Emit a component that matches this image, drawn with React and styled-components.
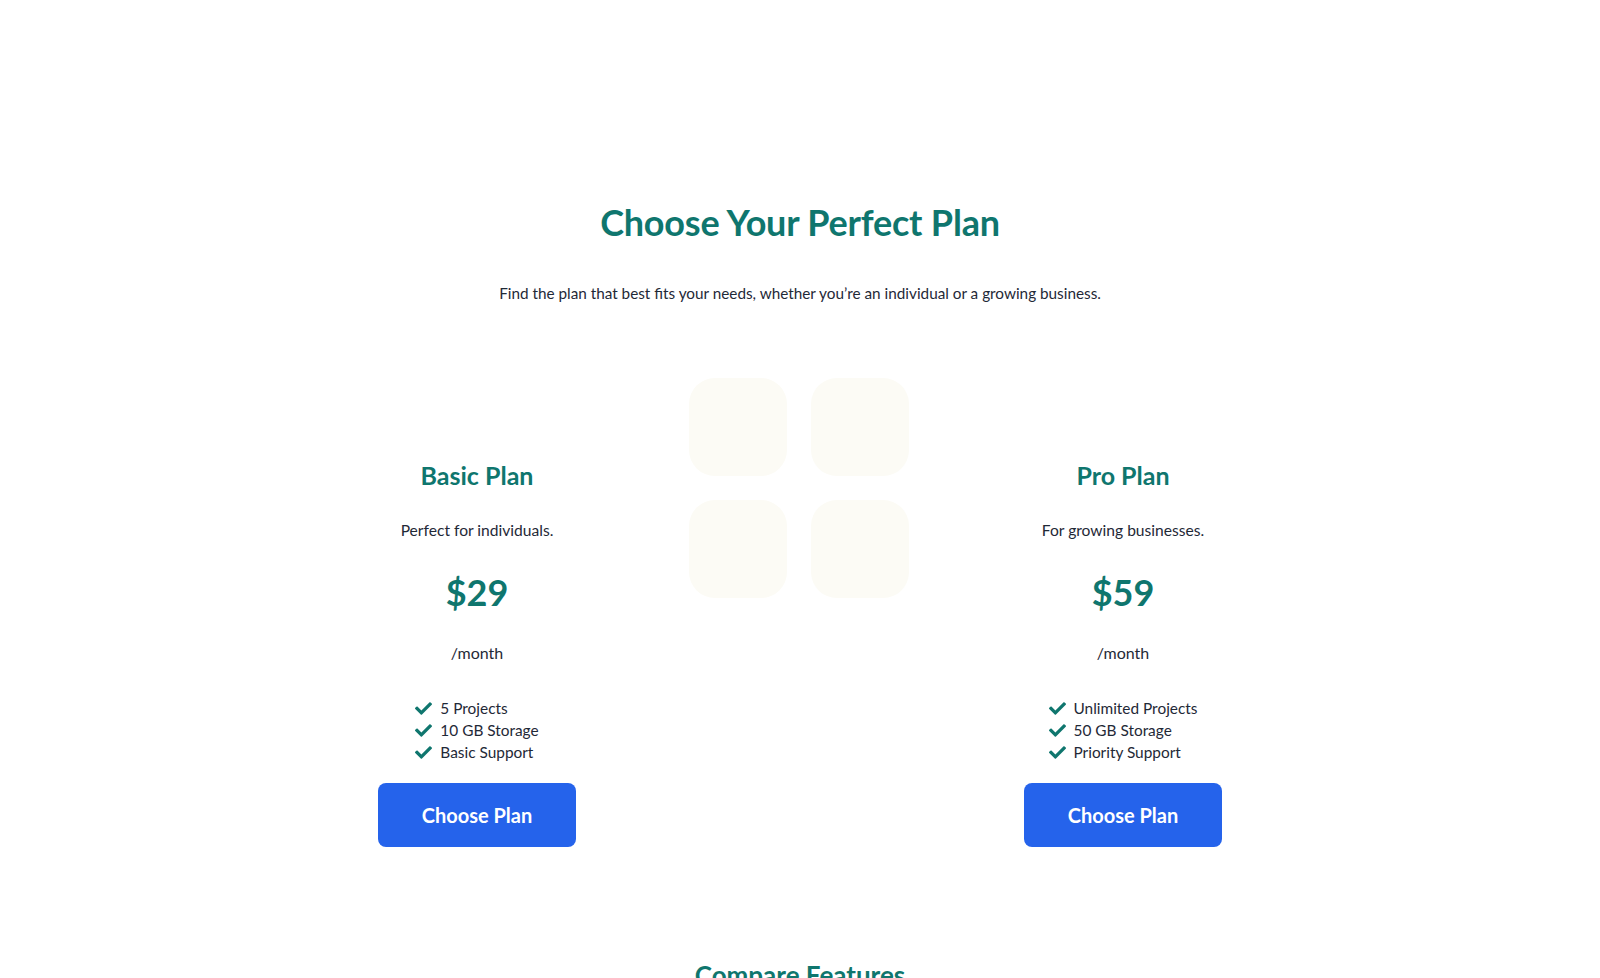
import React from "react";
import styled, { createGlobalStyle } from "styled-components";
import { FaCheck } from "react-icons/fa";

const Global = createGlobalStyle`
  html, body { margin: 0; padding: 0; background: #ffffff; }
  body { font-family: "Lato", "Inter", "Liberation Sans", sans-serif; color: #1f2937; }
  * { box-sizing: border-box; }
`;

const Page = styled.main`
  display: flex;
  flex-direction: column;
  align-items: center;
  padding-top: 202px;
  min-height: 978px;
  overflow: hidden;
`;

const Title = styled.h1`
  margin: 0;
  font-size: 36px;
  line-height: 40px;
  font-weight: 700;
  color: #0f766e;
  letter-spacing: -0.2px;
`;

const Subtitle = styled.p`
  margin: 39px 0 0;
  font-size: 15.3px;
  line-height: 24px;
  color: #1f2937;
`;

const Grid = styled.section`
  display: grid;
  grid-template-columns: repeat(3, 280px);
  column-gap: 43px;
  align-items: start;
  margin-top: 73px;
`;

const Card = styled.article`
  display: flex;
  flex-direction: column;
  align-items: center;
  padding-top: 81px;
  text-align: center;
`;

const PlanName = styled.h2`
  margin: 0;
  font-size: 25px;
  line-height: 32px;
  font-weight: 700;
  color: #0f766e;
`;

const PlanDesc = styled.p`
  margin: 27px 0 0;
  font-size: 15.6px;
  line-height: 24px;
`;

const Price = styled.div`
  margin-top: 30px;
  font-size: 36px;
  line-height: 40px;
  font-weight: 700;
  color: #0f766e;
`;

const Period = styled.div`
  margin-top: 29px;
  font-size: 16px;
  line-height: 24px;
`;

const Features = styled.ul`
  list-style: none;
  margin: 32px 0 0;
  padding: 0;
  display: flex;
  flex-direction: column;
  align-items: flex-start;
`;

const Feature = styled.li`
  display: flex;
  align-items: center;
  gap: 8px;
  font-size: 15.4px;
  line-height: 22px;
  color: #1f2937;
  svg { color: #0f766e; width: 17px; height: 17px; flex: none; }
`;

const Button = styled.button`
  margin-top: 20px;
  width: 198px;
  height: 64px;
  border: none;
  border-radius: 8px;
  background: #2563eb;
  color: #ffffff;
  font-family: inherit;
  font-size: 20px;
  font-weight: 700;
  cursor: pointer;
`;

const Artwork = styled.div`
  display: flex;
  justify-content: center;
`;

const CompareTitle = styled.h2`
  margin: 110px 0 0;
  font-size: 26px;
  line-height: 36px;
  font-weight: 700;
  color: #0f766e;
`;

const GridArt = () => (
  <svg width="222" height="222" viewBox="0 0 222 222" aria-hidden="true">
    <rect x="0" y="0" width="98" height="98" rx="26" fill="#fcfbf5" />
    <rect x="122" y="0" width="98" height="98" rx="26" fill="#fcfbf5" />
    <rect x="0" y="122" width="98" height="98" rx="26" fill="#fcfbf5" />
    <rect x="122" y="122" width="98" height="98" rx="26" fill="#fcfbf5" />
  </svg>
);

const PlanCard = ({ name, desc, price, features }) => (
  <Card>
    <PlanName>{name}</PlanName>
    <PlanDesc>{desc}</PlanDesc>
    <Price>{price}</Price>
    <Period>/month</Period>
    <Features>
      {features.map((f) => (
        <Feature key={f}>
          <FaCheck />
          {f}
        </Feature>
      ))}
    </Features>
    <Button>Choose Plan</Button>
  </Card>
);

export default function App() {
  return (
    <>
      <Global />
      <Page>
        <Title>Choose Your Perfect Plan</Title>
        <Subtitle>
          Find the plan that best fits your needs, whether you’re an individual or a growing business.
        </Subtitle>
        <Grid>
          <PlanCard
            name="Basic Plan"
            desc="Perfect for individuals."
            price="$29"
            features={["5 Projects", "10 GB Storage", "Basic Support"]}
          />
          <Artwork>
            <GridArt />
          </Artwork>
          <PlanCard
            name="Pro Plan"
            desc="For growing businesses."
            price="$59"
            features={["Unlimited Projects", "50 GB Storage", "Priority Support"]}
          />
        </Grid>
        <CompareTitle>Compare Features</CompareTitle>
      </Page>
    </>
  );
}
